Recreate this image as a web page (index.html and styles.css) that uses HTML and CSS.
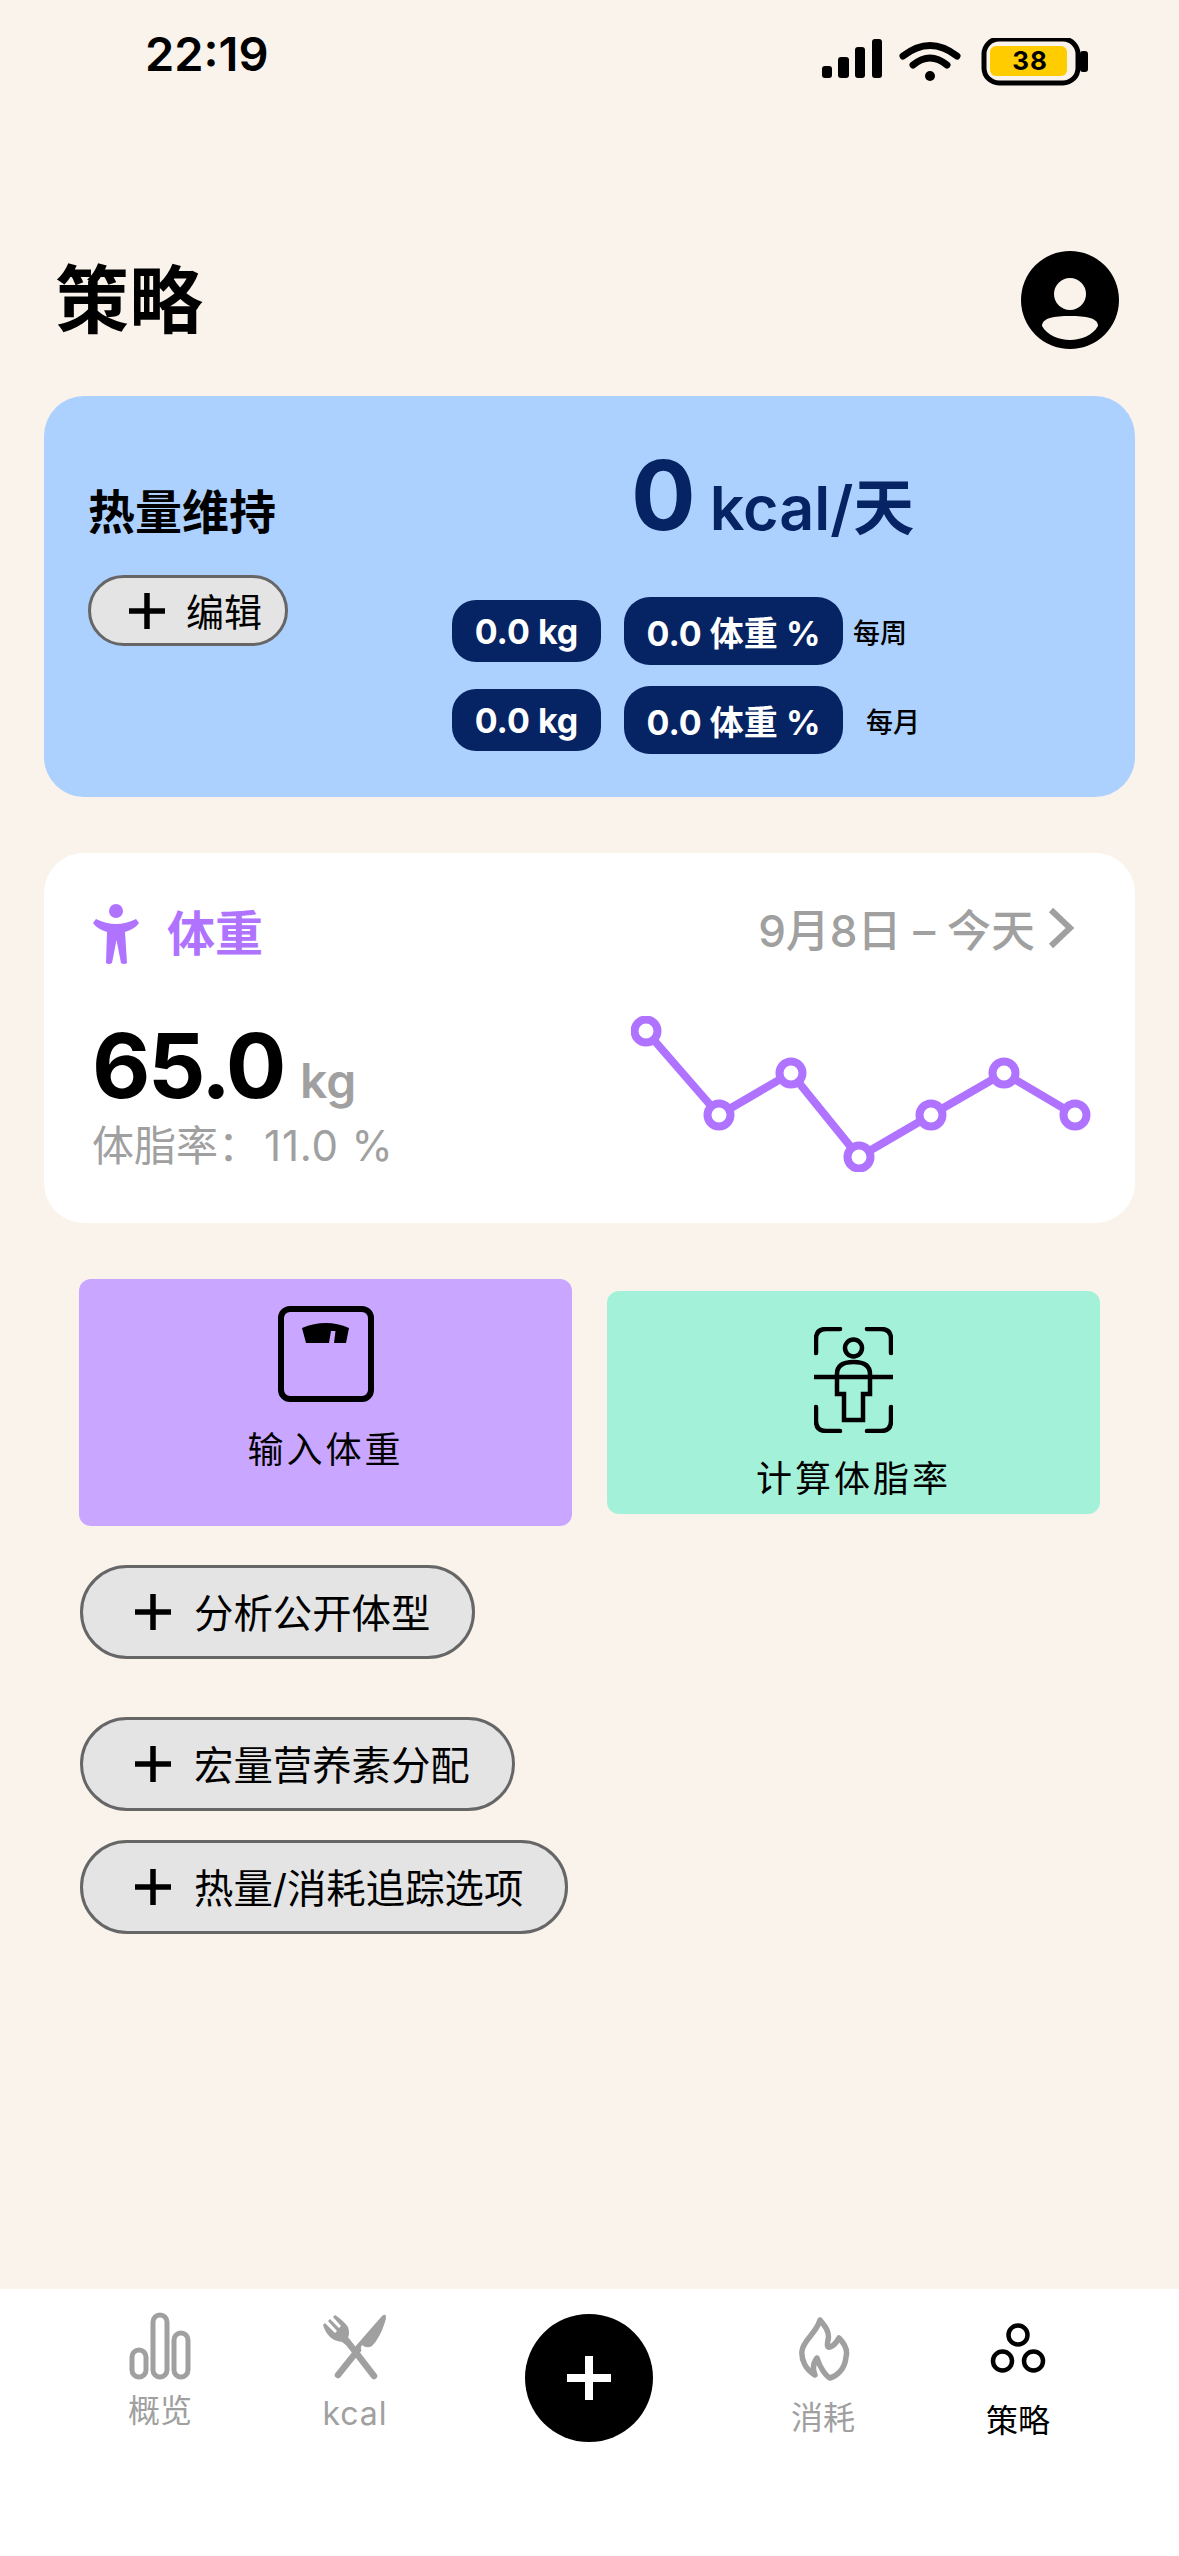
FILE: index.html
```html
<!DOCTYPE html>
<html lang="zh-CN">
<head>
<meta charset="utf-8">
<title>策略</title>
<link rel="stylesheet" href="styles.css">
</head>
<body>
<main class="page">
  <header class="status">
    <span class="time">22:19</span>
    <svg class="status-icons" viewBox="0 0 270 50" width="270" height="50">
      <rect x="2" y="28" width="10" height="12" rx="3"/>
      <rect x="18" y="19" width="11" height="21" rx="3"/>
      <rect x="35" y="9" width="10" height="31" rx="3"/>
      <rect x="52" y="1" width="10" height="39" rx="3"/>
      <path class="wifi" d="M83 18 Q110 -3 137 18"/>
      <path class="wifi" d="M93 27 Q110 13 127 27"/>
      <circle cx="110" cy="38" r="5"/>
      <rect class="batt" x="164" y="1" width="94" height="44" rx="15"/>
      <rect class="fill" x="170" y="8" width="77" height="30" rx="6"/>
      <rect x="260" y="13" width="8" height="21" rx="3"/>
      <text class="batt-text" x="210" y="32">38</text>
    </svg>
  </header>

  <div class="title-row">
    <h1 class="title">策略</h1>
    <svg class="avatar" viewBox="0 0 98 98" width="98" height="98">
      <circle cx="49" cy="49" r="49"/>
      <circle class="hole" cx="49" cy="43" r="16"/>
      <path class="hole" d="M21 75 C21 67 33 65 49 65 C65 65 77 67 77 75 C72 84 60 89 49 89 C38 89 26 84 21 75Z"/>
    </svg>
  </div>

  <section class="card card-blue">
    <div class="goal-left">
      <h2 class="goal-title">热量维持</h2>
      <div class="pill pill-small">
        <svg class="plus" viewBox="0 0 36 36" width="36" height="36"><path d="M18 0V36M0 18H36"/></svg>
        <span class="pill-text">编辑</span>
      </div>
    </div>
    <div class="goal-right">
      <div class="goal-number"><span class="zero">0</span><span class="unit">kcal/天</span></div>
      <div class="badge-row">
        <span class="badge badge-short">0.0 kg</span>
        <span class="badge badge-long">0.0 体重 %</span>
        <span class="period">每周</span>
      </div>
      <div class="badge-row">
        <span class="badge badge-short">0.0 kg</span>
        <span class="badge badge-long">0.0 体重 %</span>
        <span class="period period-month">每月</span>
      </div>
    </div>
  </section>

  <section class="card card-white">
    <div class="weight-head">
      <div class="weight-name">
        <svg class="person" viewBox="0 0 48 60" width="48" height="60">
          <ellipse cx="24" cy="7" rx="7" ry="7"/>
          <path d="M1 19 L4 15 Q14 20 24 20 Q34 20 44 15 L47 19 Q43 25 33 28 L35 59 Q32 61 29 59 L24.500 36 L20 59 Q17 61 14 59 L15 28 Q5 25 1 19Z"/>
        </svg>
        <span>体重</span>
      </div>
      <div class="weight-range">
        <span>9月8日 – 今天</span>
        <svg class="chevron" viewBox="0 0 28 42" width="28" height="42"><path d="M4 3L23 21L4 39"/></svg>
      </div>
    </div>
    <div class="weight-body">
      <div class="weight-values">
        <div class="weight-main"><span class="weight-num">65.0</span><span class="weight-unit">kg</span></div>
        <div class="fat">体脂率：<span class="fat-value">11.0 %</span></div>
      </div>
      <svg class="chart" viewBox="0 0 460 156" width="460" height="156">
        <polyline points="15,15 88,99 160,57 228,141 300,99 373,57 444,99"/>
        <circle cx="15" cy="15" r="11.500"/>
        <circle cx="88" cy="99" r="11.500"/>
        <circle cx="160" cy="57" r="11.500"/>
        <circle cx="228" cy="141" r="11.500"/>
        <circle cx="300" cy="99" r="11.500"/>
        <circle cx="373" cy="57" r="11.500"/>
        <circle cx="444" cy="99" r="11.500"/>
      </svg>
    </div>
  </section>

  <div class="tiles">
    <div class="tile tile-purple">
      <svg class="scale-icon" viewBox="0 0 96 96" width="96" height="96">
        <rect x="3" y="3" width="90" height="90" rx="9"/>
        <path class="dial" d="M24 22 Q48 12 71 22 L68 37 L56 37 L57.500 25 L53 25 L51 37 L28 37Z"/>
      </svg>
      <span>输入体重</span>
    </div>
    <div class="tile tile-green">
      <svg class="body-icon" viewBox="0 0 79 106" width="79" height="106">
        <path d="M2 26V12Q2 2 12 2H26M53 2H67Q77 2 77 12V26M2 80V94Q2 104 12 104H26M53 104H67Q77 104 77 94V80"/>
        <circle cx="39.500" cy="21" r="8.500"/>
        <path d="M0 50H79M23 67V47Q23 35 39.500 35Q56 35 56 47V67H49V93H30V67Z"/>
      </svg>
      <span>计算体脂率</span>
    </div>
  </div>

  <div class="pill pill-large pill-first">
    <svg class="plus" viewBox="0 0 36 36" width="36" height="36"><path d="M18 0V36M0 18H36"/></svg>
    <span class="pill-text">分析公开体型</span>
  </div>
  <div class="pill pill-large pill-second">
    <svg class="plus" viewBox="0 0 36 36" width="36" height="36"><path d="M18 0V36M0 18H36"/></svg>
    <span class="pill-text">宏量营养素分配</span>
  </div>
  <div class="pill pill-large pill-third">
    <svg class="plus" viewBox="0 0 36 36" width="36" height="36"><path d="M18 0V36M0 18H36"/></svg>
    <span class="pill-text">热量/消耗追踪选项</span>
  </div>

  <nav class="tabbar">
    <div class="tab">
      <svg class="tab-icon outline" viewBox="0 0 62 68" width="62" height="68">
        <rect x="3" y="38" width="14" height="27" rx="7"/>
        <rect x="24" y="3" width="14" height="62" rx="7"/>
        <rect x="45" y="21" width="14" height="44" rx="7"/>
      </svg>
      <span class="tab-label label-overview">概览</span>
    </div>
    <div class="tab">
      <svg class="tab-icon solid" viewBox="0 0 65 66" width="65" height="66">
        <path class="knife-handle" d="M16 61L36 36"/>
        <path d="M32 34L60 2Q66 -2 63 8Q58 24 50 32Q45 35 40 31L36 40Z"/>
        <path d="M1 11L3 9L13 19L15 17L6 7L8 5L17 14L19 12L11 3L13 1Q22 7 26 13Q28 19 26 24L28 28L24 31L20 28Q12 27 8 23Q3 18 1 11Z"/>
        <path class="knife-handle" d="M25 27L52 62"/>
      </svg>
      <span class="tab-label label-kcal">kcal</span>
    </div>
    <div class="tab-add">
      <svg viewBox="0 0 128 128" width="128" height="128">
        <circle cx="64" cy="64" r="64"/>
        <path class="add-cross" d="M64 42V86M42 64H86"/>
      </svg>
    </div>
    <div class="tab">
      <svg class="tab-icon flame" viewBox="0 0 52 64" width="52" height="64">
        <path d="M22 3C27 9 32 15 30 23C29 28 29 31 32 30C36 29 38 26 41 21C47 27 50 33 48 40C47 52 39 59 32 61C28 59 22 51 19 41C16 45 14 51 17 58C8 53 3 43 4 34C5 23 18 17 22 3Z"/>
      </svg>
      <span class="tab-label label-burn">消耗</span>
    </div>
    <div class="tab tab-active">
      <svg class="tab-icon circles" viewBox="0 0 56 52" width="56" height="52">
        <circle cx="28" cy="13" r="9.500"/>
        <circle cx="12.500" cy="39" r="9.500"/>
        <circle cx="43.500" cy="39" r="9.500"/>
      </svg>
      <span class="tab-label label-strategy">策略</span>
    </div>
  </nav>
</main>
</body>
</html>
```
FILE: styles.css
```css
* { box-sizing: border-box; }
html, body { margin: 0; padding: 0; }
body {
  background: #FAF3EC;
  font-family: "Inter", "Noto Sans CJK SC", "Noto Sans", sans-serif;
  color: #000;
}
.page {
  width: 1179px;
  height: 2556px;
  display: flex;
  flex-direction: column;
  overflow: hidden;
}
.status {
  height: 110px;
  display: flex;
  justify-content: space-between;
  align-items: flex-start;
  padding: 0 89px 0 145px;
}
.time {
  margin-top: 27px;
  font-size: 47px;
  line-height: 54px;
  font-weight: 600;
}
.status-icons { margin-top: 38px; fill: #000; }
.wifi { fill: none; stroke: #000; stroke-width: 7; stroke-linecap: round; }
.batt { fill: none; stroke: #000; stroke-width: 5; }
.fill { fill: #FFCC00; }
.batt-text { font-size: 26px; font-weight: 700; text-anchor: middle; letter-spacing: 1px; }

.title-row {
  margin-top: 141px;
  height: 98px;
  padding: 0 60px 0 55px;
  display: flex;
  justify-content: space-between;
  align-items: center;
}
.title { margin: 0; font-size: 74px; line-height: 98px; font-weight: 700; }
.avatar { fill: #000; }
.hole { fill: #FAF3EC; }

.card { margin: 0 44px; border-radius: 40px; }
.card-blue {
  margin-top: 47px;
  height: 401px;
  background: #ADD1FF;
  display: flex;
  padding-left: 44px;
}
.goal-left { width: 364px; padding-top: 88px; }
.goal-title { margin: 0; font-size: 47px; line-height: 56px; font-weight: 600; }
.pill {
  display: flex;
  align-items: center;
  background: #E4E4E4;
  border: 3px solid #666;
  border-radius: 60px;
}
.pill-text { margin-top: -3px; }
.pill-small {
  margin-top: 35px;
  width: 200px;
  height: 71px;
  padding-left: 38px;
  gap: 21px;
  font-size: 38px;
}
.plus { flex: none; }
.plus path { stroke: #000; stroke-width: 5.500; fill: none; }
.goal-right { display: flex; flex-direction: column; }
.goal-number {
  margin-top: 46px;
  margin-left: 179px;
  height: 108px;
  display: flex;
  align-items: baseline;
  color: #062363;
}
.zero { font-size: 96px; line-height: 106px; font-weight: 700; }
.unit { margin-left: 14px; font-size: 61px; font-weight: 600; }
.badge-row { display: flex; align-items: center; height: 68px; gap: 23px; margin-bottom: 21px; }
.goal-number + .badge-row { margin-top: 47px; }
.badge {
  display: flex;
  align-items: center;
  justify-content: center;
  background: #062363;
  color: #fff;
  font-size: 34px;
  font-weight: 700;
  white-space: nowrap;
}
.badge-short { width: 149px; height: 62px; border-radius: 24px; }
.badge-long { width: 219px; height: 68px; border-radius: 26px; }
.period { font-size: 27px; font-weight: 500; margin-left: -13px; }
.period-month { margin-left: 0; }

.card-white {
  margin-top: 56px;
  height: 370px;
  background: #fff;
  padding: 51px 60px 0 48px;
}
.weight-head { display: flex; justify-content: space-between; align-items: flex-start; }
.weight-name {
  display: flex;
  align-items: center;
  gap: 27px;
  font-size: 48px;
  font-weight: 700;
  color: #AF73FF;
  line-height: 60px;
}
.person { fill: #AF73FF; }
.weight-range {
  display: flex;
  align-items: center;
  gap: 12px;
  height: 48px;
  font-size: 44px;
  font-weight: 500;
  color: #A0A0A0;
}
.chevron { fill: none; stroke: #A0A0A0; stroke-width: 6; }
.weight-body { display: flex; justify-content: space-between; }
.weight-values { margin-top: 52px; }
.weight-main { display: flex; align-items: baseline; gap: 16px; }
.weight-num { font-size: 90px; line-height: 100px; font-weight: 700; letter-spacing: -2.500px; }
.weight-unit { font-size: 48px; font-weight: 600; color: #A0A0A0; }
.fat { margin-top: 5px; font-size: 42px; line-height: 50px; color: #A0A0A0; }
.fat-value { letter-spacing: 0.800px; margin-left: 4px; }
.chart { margin-top: 52px; margin-right: -16px; }
.chart polyline { fill: none; stroke: #AF73FF; stroke-width: 8; stroke-linejoin: round; }
.chart circle { fill: #fff; stroke: #AF73FF; stroke-width: 8; }

.tiles {
  margin: 56px 79px 0;
  display: flex;
  align-items: center;
  justify-content: space-between;
}
.tile {
  width: 493px;
  border-radius: 12px;
  display: flex;
  flex-direction: column;
  align-items: center;
  font-size: 36px;
  letter-spacing: 3px;
}
.tile-purple { height: 247px; background: #C9A6FF; padding-top: 27px; gap: 19px; }
.tile-green { height: 223px; background: #A4F1D9; padding-top: 36px; gap: 17px; }
.scale-icon rect { fill: none; stroke: #000; stroke-width: 6; }
.dial { fill: #000; }
.body-icon { fill: none; stroke: #000; stroke-width: 4.500; stroke-linecap: round; }

.pill-large {
  height: 94px;
  margin-left: 80px;
  padding-left: 52px;
  padding-right: 42px;
  gap: 23px;
  font-size: 39.400px;
  align-self: flex-start;
}
.pill-first { margin-top: 39px; }
.pill-second { margin-top: 58px; }
.pill-third { margin-top: 29px; }

.tabbar {
  margin-top: auto;
  height: 267px;
  background: #fff;
  display: grid;
  grid-template-columns: 194px 194px 276px 194px 194px;
  padding-left: 63px;
  align-items: start;
}
.tab {
  display: flex;
  flex-direction: column;
  align-items: center;
  color: #A0A0A0;
  font-size: 32px;
  line-height: 40px;
}
.tab-label { display: block; }
.tab-active { color: #000; }
.tab-icon { display: block; margin-top: 23px; }
.outline { fill: none; stroke: #A0A0A0; stroke-width: 5; }
.solid { fill: #A0A0A0; margin-top: 25px; }
.knife-handle { fill: none; stroke: #A0A0A0; stroke-width: 6.500; stroke-linecap: round; }
.flame { fill: none; stroke: #A0A0A0; stroke-width: 5.500; stroke-linejoin: round; margin-top: 28px; }
.circles { fill: none; stroke: #000; stroke-width: 4.500; margin-top: 33px; }
.label-overview { margin-top: 11px; }
.label-kcal { margin-top: 14px; letter-spacing: 1px; margin-left: 2px; }
.label-burn { margin-top: 17px; margin-left: -2px; }
.label-strategy { margin-top: 27px; }
.tab-add { display: flex; justify-content: center; padding-top: 25px; }
.tab-add circle { fill: #000; }
.add-cross { stroke: #fff; stroke-width: 8; fill: none; }
```
